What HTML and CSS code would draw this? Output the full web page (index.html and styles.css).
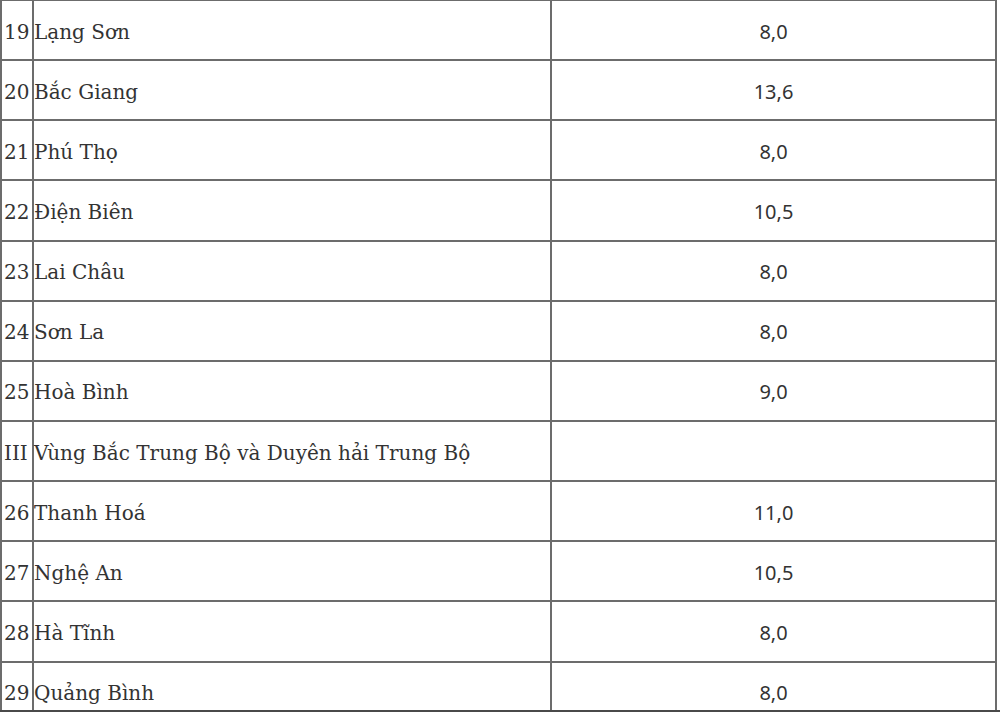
FILE: index.html
```html
<!DOCTYPE html>
<html lang="vi">
<head>
<meta charset="utf-8">
<title>Bảng</title>
<link rel="stylesheet" href="styles.css">
</head>
<body>
<div class="frame">
<table class="grid">
<colgroup><col class="c-no"><col class="c-name"><col class="c-val"></colgroup>
<tbody>
<tr><td class="no">19</td><td class="name">Lạng Sơn</td><td class="val">8,0</td></tr>
<tr><td class="no">20</td><td class="name">Bắc Giang</td><td class="val">13,6</td></tr>
<tr><td class="no">21</td><td class="name">Phú Thọ</td><td class="val">8,0</td></tr>
<tr><td class="no">22</td><td class="name">Điện Biên</td><td class="val">10,5</td></tr>
<tr><td class="no">23</td><td class="name">Lai Châu</td><td class="val">8,0</td></tr>
<tr><td class="no">24</td><td class="name">Sơn La</td><td class="val">8,0</td></tr>
<tr><td class="no">25</td><td class="name">Hoà Bình</td><td class="val">9,0</td></tr>
<tr><td class="no">III</td><td class="name">Vùng Bắc Trung Bộ và Duyên hải Trung Bộ</td><td class="val"></td></tr>
<tr><td class="no">26</td><td class="name">Thanh Hoá</td><td class="val">11,0</td></tr>
<tr><td class="no">27</td><td class="name">Nghệ An</td><td class="val">10,5</td></tr>
<tr><td class="no">28</td><td class="name">Hà Tĩnh</td><td class="val">8,0</td></tr>
<tr><td class="no">29</td><td class="name">Quảng Bình</td><td class="val">8,0</td></tr>
</tbody>
</table>
</div>
</body>
</html>
```
FILE: styles.css
```css
html, body {
  margin: 0;
  padding: 0;
  background: #ffffff;
}
.frame {
  height: 710px;
  overflow: hidden;
  border-bottom: 2px solid #4a4a4a;
}
.grid {
  width: 997px;
  margin-top: -1px;
  border-collapse: collapse;
  table-layout: fixed;
  color: #333333;
}
.c-no { width: 32px; }
.c-name { width: 518px; }
.c-val { width: auto; }
.grid tr { height: 60.15px; }
.grid td {
  border: 2px solid #6c6c6c;
  padding: 0;
  vertical-align: middle;
  white-space: nowrap;
}
.no, .name {
  font-family: "DejaVu Serif", "Liberation Serif", serif;
  font-size: 20px;
  padding-top: 3px !important;
}
.no { padding-left: 2px !important; }
.name { padding-left: 0 !important; }
.val {
  font-family: "Noto Sans", "Open Sans", sans-serif;
  font-size: 20px;
  text-align: center;
  padding-top: 2px !important;
}
```
